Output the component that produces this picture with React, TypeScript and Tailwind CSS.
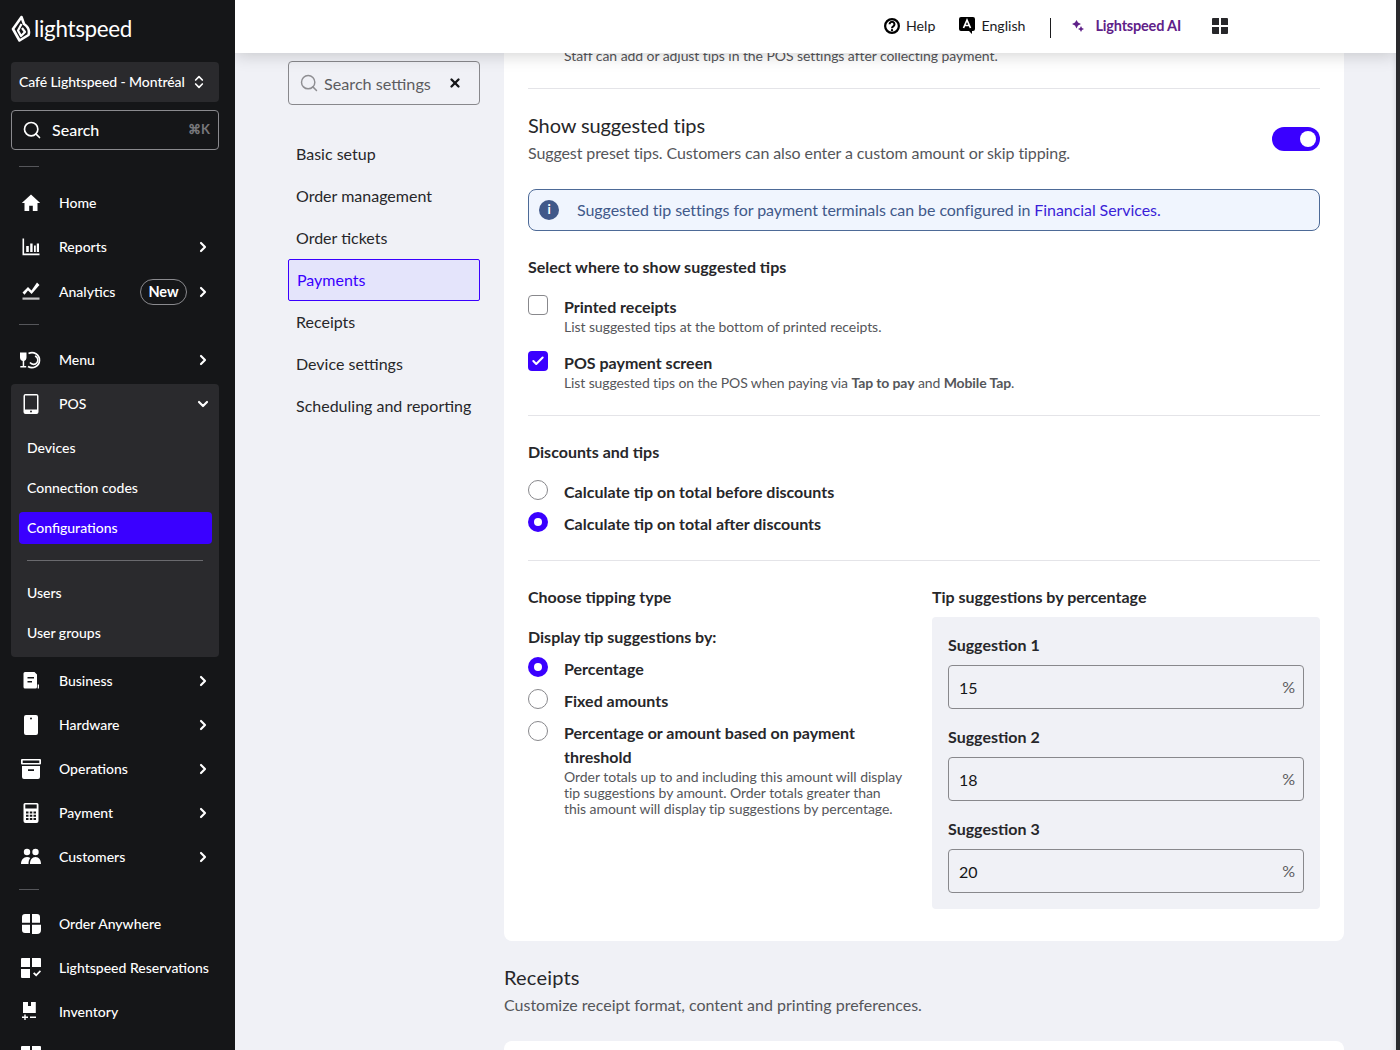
import { ChevronRight, ChevronDown, ChevronsUpDown, Search, X, Check } from "lucide-react";
import type { ReactNode } from "react";

// Sidebar icons, drawn to match the reference glyphs
const icons: Record<string, ReactNode> = {
  home: <path d="M10 1.500 0.800 10h2.700v8h4.700v-5.200h3.600V18h4.700v-8h2.700z" />,
  reports: (
    <>
      <path d="M1.500 1.500h1.600v15h15.400v1.700H1.500z" />
      <path d="M5.200 9h2.600v6H5.200zM9.200 6.500h2.400V15H9.200zM13 8.500h1.800V15H13zM15.800 6.500h2.200V15h-2.200z" />
    </>
  ),
  analytics: (
    <>
      <path d="M1.500 10.500l5.500-5.500 3.500 3.500L16 .500l2.500 2.500-7.900 9L7 8.500l-3.500 4.300z" />
      <rect x="1.500" y="15.500" width="17" height="2.200" opacity="0.75" />
    </>
  ),
  menu: (
    <>
      <path d="M-1 2.500h6.500v5c0 2-1.200 3.200-2.300 3.500v5h2v1.500H-.7V16h2.400v-5C.2 10.700-1 9.500-1 7.500z" />
      <path fill="none" stroke="white" strokeWidth="1.700" d="M7.500 3.500a7.500 7.500 0 1 1-.5 13" />
      <path fill="none" stroke="white" strokeWidth="1.600" d="M14 6a4.300 4.300 0 1 1-5 6.500" />
    </>
  ),
  pos: <path fillRule="evenodd" d="M4.500 0h11A2 2 0 0 1 17.500 2v16a2 2 0 0 1-2 2h-11a2 2 0 0 1-2-2V2a2 2 0 0 1 2-2zM4 1.500V15.500h12V1.500zM10 16.500a1 1 0 1 0 0 2 1 1 0 0 0 0-2z" />,
  business: (
    <>
      <path fillRule="evenodd" d="M4 1h9.500l2.500 2.500V16a1.500 1.500 0 0 1-1.500 1.500H4A1.500 1.500 0 0 1 2.500 16V2.500A1.500 1.500 0 0 1 4 1zm2.500 5v1.400h6.500V6zm0 4v1.400h4.500V10z" />
      <rect x="16.700" y="13.500" width="1.300" height="4" />
    </>
  ),
  hardware: <path fillRule="evenodd" d="M5 0h10a2 2 0 0 1 2 2v16a2 2 0 0 1-2 2H5a2 2 0 0 1-2-2V2a2 2 0 0 1 2-2zm5 2.500a1 1 0 1 0 0 2 1 1 0 0 0 0-2z" />,
  operations: <path fillRule="evenodd" d="M1 0h18a1 1 0 0 1 1 1v3.500a1 1 0 0 1-1 1H1a1 1 0 0 1-1-1V1a1 1 0 0 1 1-1zm.7 1.600v2.300h16.600V1.600zM1 7h18v11a2 2 0 0 1-2 2H3a2 2 0 0 1-2-2zm6 3.300v1.800h6v-1.800z" />,
  payment: <path fillRule="evenodd" d="M4 0h12a1.500 1.500 0 0 1 1.500 1.500V18a2 2 0 0 1-2 2h-11a2 2 0 0 1-2-2V1.500A1.500 1.500 0 0 1 4 0zm.3 1.500v4h11.400v-4zm.7 7v2h2.500v-2zm3.800 0v2h2.500v-2zm3.700 0v2H15v-2zm-7.500 3.200v2h2.500v-2zm3.800 0v2h2.500v-2zm3.700 0v2H15v-2zM5 15v2h2.500v-2zm3.800 0v2h2.500v-2zm3.700 0v2H15v-2z" />,
  customers: (
    <>
      <circle cx="6" cy="5" r="3.200" />
      <circle cx="14.500" cy="5" r="3.200" />
      <path d="M0 17c0-4 2.500-7 6-7 1.300 0 2.400.3 3.300.9C8 12.200 7.500 14.500 7.500 17zM20 17c0-4-2-7-5.500-7S9 13 9 17z" />
    </>
  ),
  order: <path d="M1 3a3 3 0 0 1 3-3h5v8.800H1zM11 0h5a3 3 0 0 1 3 3v5.800h-8zM1 10.800h8V19H4a3 3 0 0 1-3-3zM11 10.800h9V16a4 4 0 0 1-4 4h-5z" />,
  reservations: (
    <>
      <path d="M0 1a1 1 0 0 1 1-1h8v9H0zM11 0h8a1 1 0 0 1 1 1v8h-9zM0 11h9v9H1a1 1 0 0 1-1-1z" />
      <path d="M12 15.500l1.300-1.300 1.900 1.900 3.700-3.800L20 13.500 15.200 18.500z" />
    </>
  ),
  inventory: (
    <>
      <path d="M2 0h5v4h3V0h4.800v11H2z" />
      <path d="M1 14.500h2.300V12.500h1.400v2h2.300v1.400H4.700V18H3.300v-2.100H1zM9 14.500h6v1.400H9z" />
    </>
  ),
};

function NavIcon({ name, size = 20 }: { name: string; size?: number }) {
  return (
    <svg width={size} height={size} viewBox="0 0 20 20" fill="white" className="shrink-0 overflow-visible">
      {icons[name]}
    </svg>
  );
}

function NavRow({ icon, label, chevron = true, badge, open, tall = true }: { icon: string; label: string; chevron?: boolean; badge?: boolean; open?: boolean; tall?: boolean }) {
  return (
    <div className={`${tall ? "h-11" : "h-10"} flex items-center pl-[10px] pr-2 text-white text-[14px] font-medium`}>
      <div className="w-[38px]"><NavIcon name={icon} /></div>
      <span className="flex-1 whitespace-nowrap -mt-[2px]">{label}</span>
      {badge && (
        <span className="h-[26px] w-[47px] mr-2 rounded-full border border-[#8a8a8e] flex items-center justify-center text-[14.500px] font-bold">New</span>
      )}
      {chevron && (open ? <ChevronDown size={16} strokeWidth={3.200} /> : <ChevronRight size={16} strokeWidth={3.200} />)}
    </div>
  );
}

function SubRow({ label, active }: { label: string; active?: boolean }) {
  return (
    <div className={`h-8 ml-2 mr-[7px] mb-2 pl-2 pb-[2px] flex items-center text-[14px] font-medium text-white rounded ${active ? "bg-[#3a00ff]" : ""}`}>{label}</div>
  );
}

function Divider() {
  return <div className="w-5 h-px bg-[#55565a] ml-2" />;
}

function Sidebar() {
  return (
    <aside className="w-[235px] shrink-0 bg-[#151618] h-full overflow-hidden pl-[11px] pr-4">
      <div className="h-[62px] flex items-center">
        <svg width="20" height="28" viewBox="0 0 20 28" fill="none" stroke="white" strokeWidth="2.600" strokeLinejoin="round" className="mb-1">
          <path d="M10.500 2 L2 14 L8.500 25.500 L17.500 20 C19 15 16 11 13 9 Z" />
          <path d="M10.500 9 L7 15.500 L10 21 L14 17 L11 13" strokeWidth="2.200" />
        </svg>
        <span className="ml-[3px] text-[22.400px] leading-none text-white tracking-[-0.3px] -mt-1">lightspeed</span>
      </div>
      <div className="h-10 rounded bg-[#2a2a2d] flex items-center pl-2 text-white text-[14px] font-medium">
        <span className="whitespace-nowrap tracking-[-0.08px] -mt-[2px]">Café Lightspeed - Montréal</span>
        <ChevronsUpDown size={16} strokeWidth={2.500} className="ml-[6px]" />
      </div>
      <div className="h-10 mt-2 rounded border border-[#8a8a8e] flex items-center pl-[10px] pr-2 text-white">
        <Search size={20} strokeWidth={2} />
        <span className="ml-[10px] flex-1 text-[16px] font-medium">Search</span>
        <span className="text-[13px] text-[#77777b] font-bold">⌘K</span>
      </div>
      <div className="mt-4 mb-[14px]"><Divider /></div>
      <NavRow icon="home" label="Home" chevron={false} />
      <NavRow icon="reports" label="Reports" />
      <div className="mt-px"><NavRow icon="analytics" label="Analytics" badge /></div>
      <div className="mt-[10px] mb-[13px]"><Divider /></div>
      <NavRow icon="menu" label="Menu" />
      <div className="bg-[#2a2a2d] rounded mt-[2px] flow-root">
        <NavRow icon="pos" label="POS" open tall={false} />
        <div className="pt-2">
          <SubRow label="Devices" />
          <SubRow label="Connection codes" />
          <SubRow label="Configurations" active />
          <div className="h-px bg-[#6a6a6e] mx-4 mt-4 mb-4" />
          <SubRow label="Users" />
          <SubRow label="User groups" />
        </div>
      </div>
      <div className="mt-[2px]">
        <NavRow icon="business" label="Business" />
        <NavRow icon="hardware" label="Hardware" />
        <NavRow icon="operations" label="Operations" />
        <NavRow icon="payment" label="Payment" />
        <NavRow icon="customers" label="Customers" />
      </div>
      <div className="mt-[10px] mb-3"><Divider /></div>
      <NavRow icon="order" label="Order Anywhere" chevron={false} />
      <NavRow icon="reservations" label="Lightspeed Reservations" chevron={false} />
      <NavRow icon="inventory" label="Inventory" chevron={false} />
      <NavRow icon="reservations" label="" chevron={false} />
    </aside>
  );
}

function Header() {
  return (
    <header className="relative z-10 h-[53px] shrink-0 bg-white shadow-[0_2px_16px_rgba(0,0,0,0.18)] flex items-center justify-end pr-[168px] text-[14.200px] text-[#1c1c1e]">
      <svg width="16" height="16" viewBox="0 0 17 17" className="-mt-[2px]">
        <circle cx="8.500" cy="8.500" r="7.300" fill="none" stroke="#000" strokeWidth="2.400" />
        <path d="M5.900 6.600a2.600 2.600 0 1 1 3.900 2.300c-.9.500-1.300 1-1.300 1.900" fill="none" stroke="#000" strokeWidth="2.200" />
        <circle cx="8.500" cy="12.900" r="1.200" fill="#000" />
      </svg>
      <span className="ml-[6px] -mt-[2px]">Help</span>
      <svg width="16" height="17" viewBox="0 0 16 17" className="ml-6 -mt-[2px]">
        <path d="M2 0h12a2 2 0 0 1 2 2v10a2 2 0 0 1-2 2h-1v3l-3-3H2a2 2 0 0 1-2-2V2a2 2 0 0 1 2-2z" fill="#000" />
        <path d="M4.500 11 8 3l3.500 8M5.800 8.500h4.400" stroke="white" strokeWidth="1.700" fill="none" />
      </svg>
      <span className="ml-[6px] -mt-[2px]">English</span>
      <div className="w-px h-5 bg-[#1c1c1e] ml-6 mt-[2px]" />
      <svg width="12" height="12" viewBox="0 0 12 12" fill="#5f2189" className="ml-[21px] -mt-[2px]">
        <path d="M4.500 0 6 2.600 9 4 6 5.600 4.500 8.500 3 5.600 0 4 3 2.600z" />
        <path d="M9 6l1 1.900L12 9l-2 1.100L9 12l-1-1.900L6 9l2-1.100z" />
      </svg>
      <span className="ml-3 font-bold text-[#5f2189] text-[14.500px] tracking-[-0.2px] -mt-[2px]">Lightspeed AI</span>
      <svg width="16" height="16" viewBox="0 0 16 16" fill="#27272a" className="ml-[31px] -mt-[2px]">
        <path d="M0 1a1 1 0 0 1 1-1h6v7H0zM9 0h6a1 1 0 0 1 1 1v6H9zM0 9h7v7H1a1 1 0 0 1-1-1zM9 9h7v6a1 1 0 0 1-1 1H9z" />
      </svg>
    </header>
  );
}

function SettingsNav() {
  const items = ["Basic setup", "Order management", "Order tickets", "Payments", "Receipts", "Device settings", "Scheduling and reporting"];
  return (
    <nav className="w-[192px] shrink-0 ml-[53px] pt-2">
      <div className="h-11 rounded border border-[#88888c] flex items-center pl-[10px] pr-[17px] text-[#5c5c60]">
        <Search size={20} strokeWidth={1.750} className="text-[#8e8e92]" />
        <span className="ml-[5px] flex-1 text-[16.200px] mt-[2px]">Search settings</span>
        <X size={14} strokeWidth={4} className="text-[#151618]" />
      </div>
      <div className="mt-[28px]">
        {items.map((item) => (
          <div key={item} className={`h-[42px] flex items-center pl-2 text-[16px] rounded-[2px] whitespace-nowrap ${item === "Payments" ? "border border-[#3a00ff] bg-[#e4e4fb] text-[#3a00ff]" : "text-[#27272a]"}`}>
            {item}
          </div>
        ))}
      </div>
    </nav>
  );
}

function Radio({ on }: { on?: boolean }) {
  return on ? (
    <div className="w-5 h-5 rounded-full bg-[#3a00ff] flex items-center justify-center shrink-0">
      <div className="w-2 h-2 rounded-full bg-white" />
    </div>
  ) : (
    <div className="w-5 h-5 rounded-full border border-[#88888c] bg-white shrink-0" />
  );
}

function RadioRow({ on, label }: { on?: boolean; label: string }) {
  return (
    <div className="flex h-8 items-start text-[16px] font-bold text-[#27272a]">
      <Radio on={on} />
      <span className="ml-4 leading-5 mt-[2px]">{label}</span>
    </div>
  );
}

function Suggestion({ n, value }: { n: number; value: string }) {
  return (
    <div className="h-[92px]">
      <div className="h-[20px] leading-5 font-bold text-[16px] text-[#27272a] mb-[10px]">Suggestion {n}</div>
      <div className="h-11 rounded border border-[#88888c] flex items-center pl-[10px] pr-[8px] text-[16px] text-[#151618]">
        <span className="flex-1 mt-[2px]">{value}</span>
        <span className="text-[#5c5c60]">%</span>
      </div>
    </div>
  );
}

function TipsCard() {
  return (
    <section className="bg-white rounded-lg px-6 w-[840px] -mt-[7px]">
      <div className="h-[42px] pl-9 text-[14px] leading-5 text-[#55565a] tracking-[-0.07px]">Staff can add or adjust tips in the POS settings after collecting payment.</div>
      <div className="h-px bg-[#e4e4e8]" />
      <div className="flex justify-between items-start pt-6">
        <div>
          <h3 className="text-[20px] leading-6 text-[#27272a] tracking-[-0.1px]">Show suggested tips</h3>
          <p className="text-[16px] leading-5 mt-[6px] text-[#55565a] tracking-[-0.1px]">Suggest preset tips. Customers can also enter a custom amount or skip tipping.</p>
        </div>
        <div className="w-12 h-6 mt-[14px] rounded-full bg-[#3a00ff] flex items-center justify-end pr-1">
          <div className="w-4 h-4 rounded-full bg-white" />
        </div>
      </div>
      <div className="h-[42px] mt-[26px] rounded-lg border border-[#4d6a97] bg-[#f0f5fe] flex items-center pl-[10px] text-[16px] text-[#41598a] tracking-[-0.07px]">
        <div className="w-5 h-5 rounded-full bg-[#41598a] flex items-center justify-center text-white text-[13px] font-bold shrink-0">i</div>
        <span className="ml-[18px]">Suggested tip settings for payment terminals can be configured in <span className="text-[#3a1fd8]">Financial Services.</span></span>
      </div>
      <h4 className="text-[16px] leading-5 font-bold text-[#27272a] mt-[26px]">Select where to show suggested tips</h4>
      <div className="flex mt-[18px]">
        <div className="w-5 h-5 rounded border border-[#88888c] shrink-0" />
        <div className="ml-4">
          <div className="text-[16px] font-bold leading-5 mt-[2px] text-[#27272a]">Printed receipts</div>
          <div className="text-[14px] leading-4 mt-[2px] text-[#55565a] tracking-[-0.05px]">List suggested tips at the bottom of printed receipts.</div>
        </div>
      </div>
      <div className="flex mt-[16px]">
        <div className="w-5 h-5 rounded bg-[#3a00ff] flex items-center justify-center shrink-0">
          <Check size={14} strokeWidth={3.500} className="text-white" />
        </div>
        <div className="ml-4">
          <div className="text-[16px] font-bold leading-5 mt-[2px] text-[#27272a]">POS payment screen</div>
          <div className="text-[14px] leading-4 mt-[2px] text-[#55565a] tracking-[-0.11px]">List suggested tips on the POS when paying via <b>Tap to pay</b> and <b>Mobile Tap</b>.</div>
        </div>
      </div>
      <div className="h-px bg-[#e4e4e8] mt-[24px]" />
      <h4 className="text-[16px] leading-5 font-bold text-[#27272a] mt-[26px]">Discounts and tips</h4>
      <div className="mt-[18px]">
        <RadioRow label="Calculate tip on total before discounts" />
        <RadioRow on label="Calculate tip on total after discounts" />
      </div>
      <div className="h-px bg-[#e4e4e8] mt-[16px]" />
      <div className="flex pt-[26px] pb-8">
        <div className="w-[404px] shrink-0 pr-[30px]">
          <h4 className="text-[16px] leading-5 font-bold text-[#27272a]">Choose tipping type</h4>
          <div className="text-[16px] leading-5 font-bold text-[#27272a] mt-[20px] mb-[10px]">Display tip suggestions by:</div>
          <RadioRow on label="Percentage" />
          <RadioRow label="Fixed amounts" />
          <div className="flex text-[16px] font-bold text-[#27272a]">
            <Radio />
            <div className="ml-4">
              <div className="leading-6">Percentage or amount based on payment threshold</div>
              <div className="text-[14px] leading-4 font-normal text-[#55565a] tracking-[-0.05px]">Order totals up to and including this amount will display tip suggestions by amount. Order totals greater than this amount will display tip suggestions by percentage.</div>
            </div>
          </div>
        </div>
        <div className="flex-1">
          <h4 className="text-[16px] leading-5 font-bold text-[#27272a]">Tip suggestions by percentage</h4>
          <div className="mt-[10px] h-[292px] rounded bg-[#f0f1f6] px-4 pt-[18px]">
            <Suggestion n={1} value="15" />
            <Suggestion n={2} value="18" />
            <Suggestion n={3} value="20" />
          </div>
        </div>
      </div>
    </section>
  );
}

export default function App() {
  return (
    <div className="flex h-[1050px] w-[1400px] overflow-hidden bg-[#2a2a2d] text-[16px]" style={{ fontFamily: '"Lato", "Open Sans", sans-serif' }}>
      <Sidebar />
      <main className="w-[1161px] shrink-0 h-full flex flex-col bg-[#f0f1f6] overflow-hidden">
        <Header />
        <div className="flex flex-1 overflow-hidden shadow-[inset_-6px_0_6px_-6px_rgba(0,0,0,0.12)]">
          <SettingsNav />
          <div className="ml-6">
            <TipsCard />
            <div className="mt-[24px] h-[76px]">
              <h2 className="text-[20px] leading-6 text-[#27272a] tracking-[0.2px]">Receipts</h2>
              <p className="text-[16px] leading-5 mt-[6px] text-[#55565a]">Customize receipt format, content and printing preferences.</p>
            </div>
            <div className="bg-white rounded-lg h-10" />
          </div>
        </div>
      </main>
    </div>
  );
}
